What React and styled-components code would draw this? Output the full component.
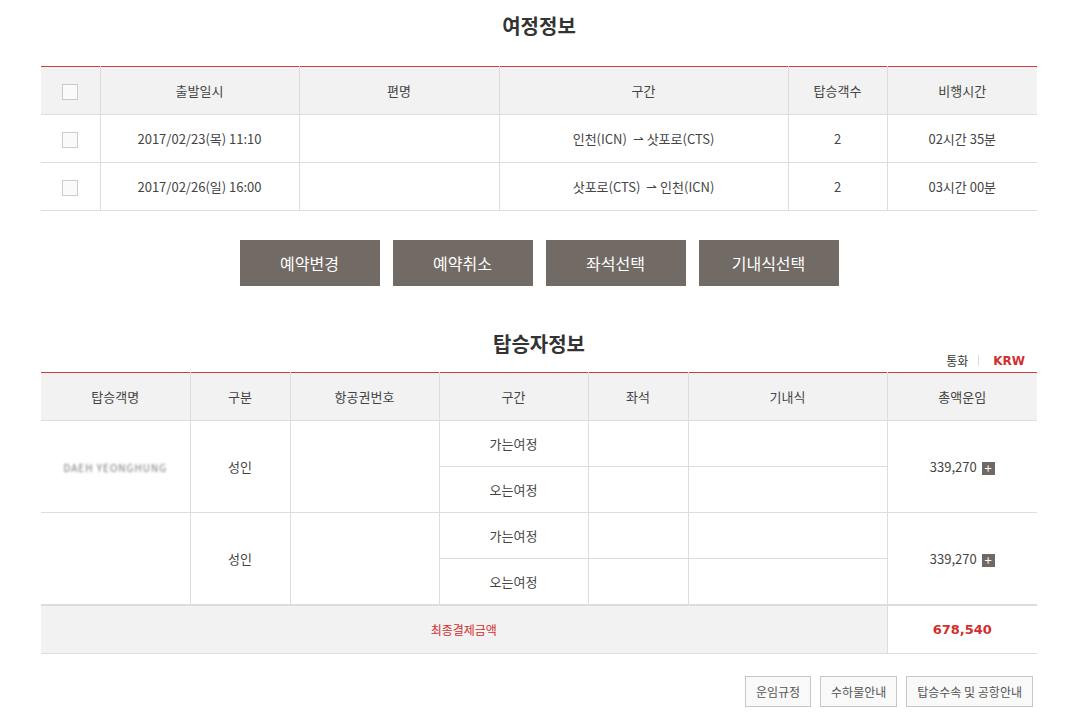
import React from "react";
import styled, { createGlobalStyle } from "styled-components";

const G = createGlobalStyle`
  body{margin:0;background:#fff;font-family:"Noto Sans CJK KR","Noto Sans",sans-serif;color:#444;}
`;
const Wrap = styled.div`width:996px;margin:0 0 0 41px;padding-top:10px;`;
const Title = styled.h2`margin:0;text-align:center;font-size:20px;font-weight:700;color:#333;line-height:32px;`;
const Table = styled.table`
  width:996px;border-collapse:collapse;table-layout:fixed;font-size:13px;color:#444;
  border-top:1px solid #d43b3b;
  th{background:#f2f2f2;font-weight:400;height:45px;border-bottom:1px solid #ddd;border-left:1px solid #ddd;}
  td{height:47px;text-align:center;border-bottom:1px solid #ddd;border-left:1px solid #ddd;padding:0;}
  th:first-child,td.first{border-left:none;}
`;
const Td = styled.td`height:${p=>p.$h||47}px !important;`;
const Box = styled.span`display:inline-block;width:14px;height:14px;border:1px solid #ccc;background:#fafafa;vertical-align:middle;`;
const Btns = styled.div`display:flex;justify-content:center;gap:13px;margin:29px 0 0;`;
const Btn = styled.button`width:140px;height:46px;background:#726a64;color:#fff;border:none;font-family:inherit;font-size:16px;`;
const Head2 = styled.div`position:relative;margin-top:42px;`;
const Cur = styled.div`position:absolute;right:12px;top:24px;font-size:12px;color:#333;display:flex;align-items:center;
  b{color:#d0302f;font-family:"DejaVu Sans",sans-serif;font-size:12px;font-weight:700;}
  i{display:inline-block;width:1px;height:11px;background:#ddd;margin:0 14px 0 10px;}`;
const Plus = styled.span`display:inline-block;width:13px;height:13px;background:#6f6864;color:#fff;font-size:13px;line-height:12px;margin-left:5px;vertical-align:-1px;`;
const Blur = styled.span`color:#777;font-size:10px;filter:blur(0.8px);letter-spacing:1px;`;
const TotalRow = styled.tr`td{background:#f2f2f2;border-top:2px solid #ddd;color:#d0302f;}
  td.v{background:#fff;font-weight:700;font-family:"DejaVu Sans",sans-serif;font-size:13px;}`;
const Foot = styled.div`display:flex;justify-content:flex-end;gap:9px;margin:22px 4px 0 0;`;
const FBtn = styled.button`height:31px;padding:0 10px;border:1px solid #c6c6c6;background:#f9f9f9;color:#555;font-family:inherit;font-size:12px;`;

const trips=[["2017/02/23(목) 11:10","인천(ICN)","삿포로(CTS)","2","02시간 35분"],["2017/02/26(일) 16:00","삿포로(CTS)","인천(ICN)","2","03시간 00분"]];

export default function App(){
  return <><G/><Wrap>
    <Title>여정정보</Title>
    <div style={{height:24}}/>
    <Table>
      <colgroup>{[59,199,200,289,99,150].map((w,i)=><col key={i} style={{width:w}}/>)}</colgroup>
      <thead><tr><th><Box/></th><th>출발일시</th><th>편명</th><th>구간</th><th>탑승객수</th><th>비행시간</th></tr></thead>
      <tbody>{trips.map((t,i)=><tr key={i}><td className="first"><Box/></td><td>{t[0]}</td><td></td><td>{t[1]} &nbsp;⇀ {t[2]}</td><td>{t[3]}</td><td>{t[4]}</td></tr>)}</tbody>
    </Table>
    <Btns>{["예약변경","예약취소","좌석선택","기내식선택"].map(b=><Btn key={b}>{b}</Btn>)}</Btns>
    <Head2><Title>탑승자정보</Title><Cur>통화<i/><b>KRW</b></Cur></Head2>
    <div style={{height:12}}/>
    <Table>
      <colgroup>{[149,100,149,149,100,199,150].map((w,i)=><col key={i} style={{width:w}}/>)}</colgroup>
      <thead><tr>{["탑승객명","구분","항공권번호","구간","좌석","기내식","총액운임"].map(h=><th key={h}>{h}</th>)}</tr></thead>
      <tbody>
        {[0,1].map(k=><React.Fragment key={k}>
          <tr><td className="first" rowSpan={2}>{k===0&&<Blur>DAEH YEONGHUNG</Blur>}</td><td rowSpan={2}>성인</td><td rowSpan={2}></td><Td $h={45}>가는여정</Td><Td $h={45}></Td><Td $h={45}></Td><td rowSpan={2}>339,270<Plus>+</Plus></td></tr>
          <tr><Td $h={45}>오는여정</Td><Td $h={45}></Td><Td $h={45}></Td></tr>
        </React.Fragment>)}
        <TotalRow><td className="first" colSpan={6} style={{height:45,fontSize:12}}>최종결제금액</td><td className="v">678,540</td></TotalRow>
      </tbody>
    </Table>
    <Foot>{["운임규정","수하물안내","탑승수속 및 공항안내"].map(b=><FBtn key={b}>{b}</FBtn>)}</Foot>
  </Wrap></>;
}
